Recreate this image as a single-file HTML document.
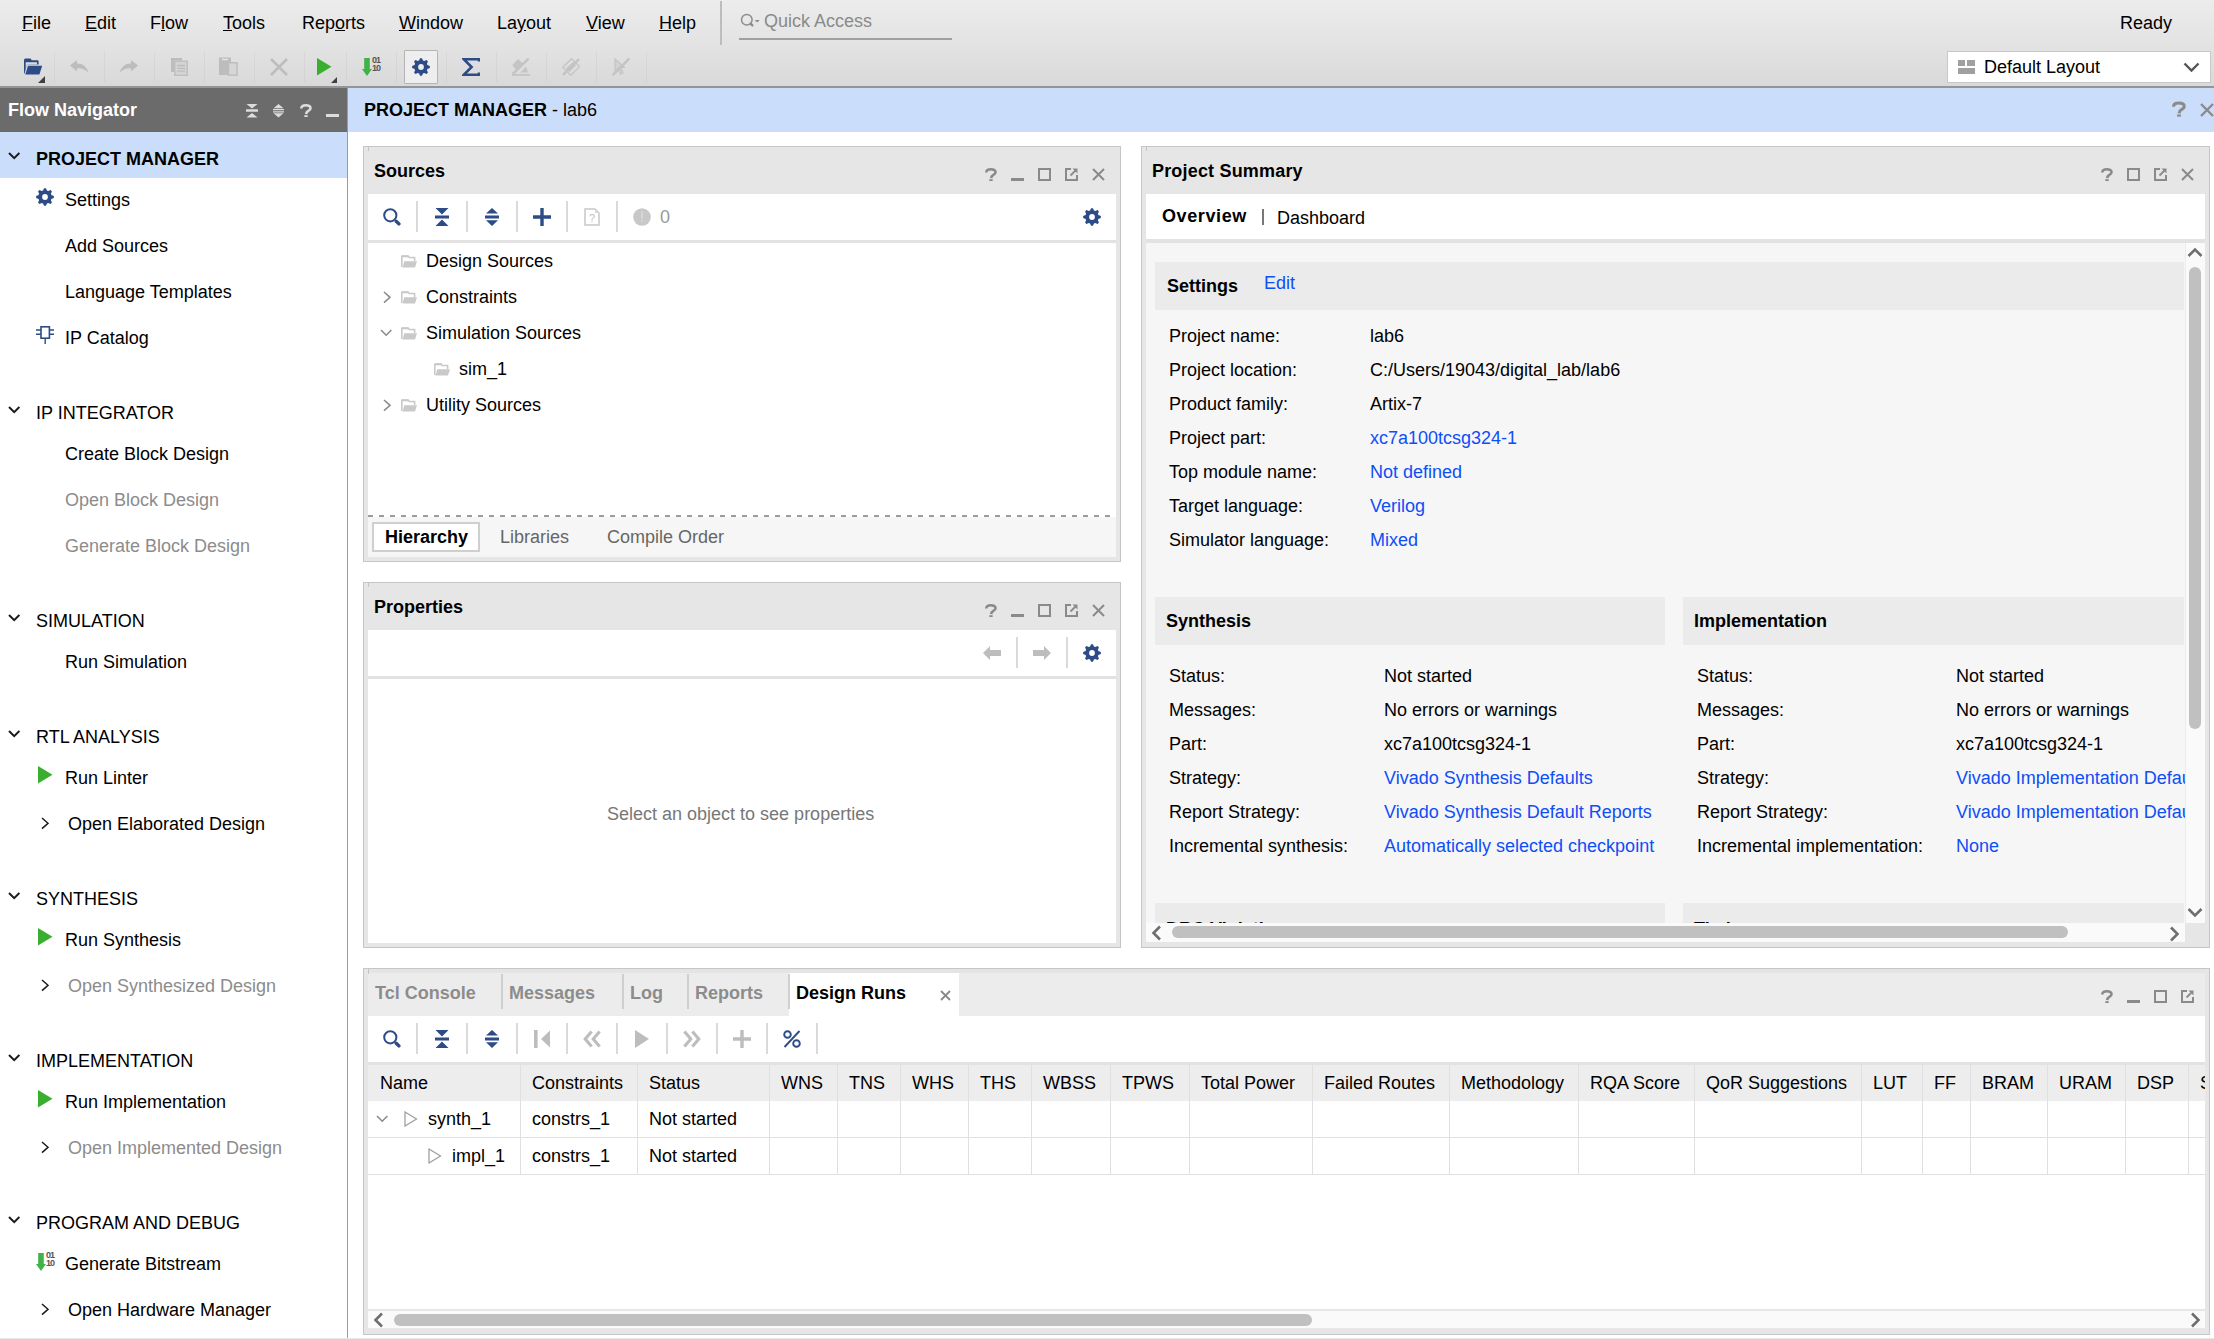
<!DOCTYPE html><html><head><meta charset="utf-8"><style>
html,body{margin:0;padding:0;}
body{width:2214px;height:1339px;position:relative;overflow:hidden;background:#fff;font-family:'Liberation Sans', sans-serif;}
body>div,body>svg{position:absolute;}
.t{position:absolute;white-space:nowrap;font-size:18px;line-height:20px;}
.u{text-decoration:underline;text-underline-offset:1px;}
</style></head><body>
<div style="left:0px;top:0px;width:2214px;height:86px;background:linear-gradient(#ececec 0px,#e3e3e3 44px,#d9d9d9 86px);"></div>
<div style="left:0px;top:86px;width:2214px;height:2px;background:#959595;"></div>
<div class="t" style="left:22px;top:13px;color:#000;"><u>F</u>ile</div>
<div class="t" style="left:85px;top:13px;color:#000;"><u>E</u>dit</div>
<div class="t" style="left:150px;top:13px;color:#000;">F<u>l</u>ow</div>
<div class="t" style="left:223px;top:13px;color:#000;"><u>T</u>ools</div>
<div class="t" style="left:302px;top:13px;color:#000;">Rep<u>o</u>rts</div>
<div class="t" style="left:399px;top:13px;color:#000;"><u>W</u>indow</div>
<div class="t" style="left:497px;top:13px;color:#000;">La<u>y</u>out</div>
<div class="t" style="left:586px;top:13px;color:#000;"><u>V</u>iew</div>
<div class="t" style="left:659px;top:13px;color:#000;"><u>H</u>elp</div>
<div style="left:720px;top:1px;width:2px;height:44px;background:#bdbdbd;"></div>
<svg style="left:740px;top:13px" width="22" height="16" viewBox="0 0 22 16"><circle cx="6.8" cy="6.8" r="5.3" fill="none" stroke="#8c8c8c" stroke-width="1.5"/><line x1="10.6" y1="10.6" x2="12.4" y2="12.4" stroke="#8c8c8c" stroke-width="2.3" stroke-linecap="round"/><path d="M14.6 7H19.8L17.2 9.6Z" fill="#8c8c8c"/></svg>
<div class="t" style="left:764px;top:11px;color:#8a8a8a;">Quick Access</div>
<div style="left:739px;top:38px;width:213px;height:2px;background:#a0a0a0;"></div>
<div class="t" style="left:2120px;top:13px;color:#000;">Ready</div>
<div style="left:54px;top:51px;width:1px;height:31px;background:rgba(0,0,0,0.035);"></div>
<div style="left:104px;top:51px;width:1px;height:31px;background:rgba(0,0,0,0.035);"></div>
<div style="left:154px;top:51px;width:1px;height:31px;background:rgba(0,0,0,0.035);"></div>
<div style="left:204px;top:51px;width:1px;height:31px;background:rgba(0,0,0,0.035);"></div>
<div style="left:254px;top:51px;width:1px;height:31px;background:rgba(0,0,0,0.035);"></div>
<div style="left:304px;top:51px;width:1px;height:31px;background:rgba(0,0,0,0.035);"></div>
<div style="left:346px;top:51px;width:1px;height:31px;background:rgba(0,0,0,0.035);"></div>
<div style="left:396px;top:51px;width:1px;height:31px;background:rgba(0,0,0,0.035);"></div>
<div style="left:446px;top:51px;width:1px;height:31px;background:rgba(0,0,0,0.035);"></div>
<div style="left:496px;top:51px;width:1px;height:31px;background:rgba(0,0,0,0.035);"></div>
<div style="left:546px;top:51px;width:1px;height:31px;background:rgba(0,0,0,0.035);"></div>
<div style="left:596px;top:51px;width:1px;height:31px;background:rgba(0,0,0,0.035);"></div>
<div style="left:646px;top:51px;width:1px;height:31px;background:rgba(0,0,0,0.035);"></div>
<svg style="left:23px;top:58px" width="20" height="18" viewBox="0 0 20 18"><path fill="#2c4b87" d="M1 2.2Q1 0.6 2.5 0.6H7.5L8.8 2.2H14.5Q15.6 2.2 15.6 3.3V6.5H5.2Q4 6.5 3.6 7.6L1.5 16Q1 15.2 1 14.5Z"/><path fill="#dcdcdc" d="M2.7 4.2H14V6.5H5.2Q4 6.5 3.6 7.6L2.7 11Z"/><path fill="#2c4b87" d="M5 7.8H19.2L16.4 16.6H2.3Z"/></svg>
<svg style="left:38px;top:76px" width="8" height="8" viewBox="0 0 8 8"><path d="M7 0V7H0Z" fill="#404040"/></svg>
<svg style="left:70px;top:60px" width="19" height="14" viewBox="0 0 19 14"><path fill="#bdbdbd" d="M0 5.5L7 0V3.4Q16 3.2 18.5 13Q15 8.2 7 8.3V11.5Z"/></svg>
<svg style="left:119px;top:60px" width="19" height="14" viewBox="0 0 19 14"><path fill="#bdbdbd" d="M19 5.5L12 0V3.4Q3 3.2 0.5 13Q4 8.2 12 8.3V11.5Z"/></svg>
<svg style="left:171px;top:57px" width="17" height="19" viewBox="0 0 17 19"><path fill="#bdbdbd" d="M0 1H11V3.5H3V15H0Z"/><rect x="3.8" y="4.2" width="12.4" height="14.2" fill="#d4d4d4" stroke="#bdbdbd" stroke-width="1.4"/><path stroke="#bdbdbd" stroke-width="1.3" d="M6.3 8.5H14M6.3 11.3H14M6.3 14.1H14"/></svg>
<svg style="left:219px;top:57px" width="19" height="19" viewBox="0 0 19 19"><rect x="0" y="0.5" width="12" height="17.5" fill="#bdbdbd"/><rect x="3" y="1.8" width="6" height="1.4" fill="#e6e6e6"/><rect x="9.5" y="5.8" width="8.6" height="12.4" fill="#d6d6d6" stroke="#bdbdbd" stroke-width="1.4"/></svg>
<svg style="left:270px;top:58px" width="18" height="18" viewBox="0 0 18 18"><path d="M1 1L17 17M17 1L1 17" stroke="#bdbdbd" stroke-width="2.6"/></svg>
<svg style="left:317px;top:58px" width="15" height="18" viewBox="0 0 15 18"><path fill="#3aaf2f" d="M0 0L14.5 8.7L0 17.4Z"/></svg>
<svg style="left:331px;top:77px" width="7" height="7" viewBox="0 0 7 7"><path d="M6 0V6H0Z" fill="#404040"/></svg>
<svg style="left:362px;top:58px" width="10" height="18" viewBox="0 0 10 18"><path fill="#3fb34a" d="M2.2 0H7.8V11H10L5 18L0 11H2.2Z"/></svg>
<div style="left:372px;top:56px;font:bold 9px/8px 'Liberation Sans',sans-serif;color:#555;letter-spacing:-1px">01<br>10</div>
<div style="left:404px;top:50px;width:32px;height:32px;background:#eeeeee;border:1px solid #b4b4b4;border-radius:1px"></div>
<svg style="left:412px;top:58px" width="18" height="18" viewBox="0 0 18 18"><path fill="#2c4b87" d="M7.04 2.59L8.07 0.15L9.93 0.15L10.96 2.59L12.15 3.08L14.60 2.08L15.92 3.40L14.92 5.85L15.41 7.04L17.85 8.07L17.85 9.93L15.41 10.96L14.92 12.15L15.92 14.60L14.60 15.92L12.15 14.92L10.96 15.41L9.93 17.85L8.07 17.85L7.04 15.41L5.85 14.92L3.40 15.92L2.08 14.60L3.08 12.15L2.59 10.96L0.15 9.93L0.15 8.07L2.59 7.04L3.08 5.85L2.08 3.40L3.40 2.08L5.85 3.08Z"/><circle cx="9" cy="9" r="2.9" fill="#eeeeee"/></svg>
<svg style="left:462px;top:58px" width="18" height="18" viewBox="0 0 18 18"><path fill="none" stroke="#2c4b87" stroke-width="2.6" stroke-linejoin="miter" d="M17 3.5V1.3H1.8L9.6 9L1.8 16.7H17V14.5"/></svg>
<svg style="left:512px;top:58px" width="18" height="18" viewBox="0 0 18 18"><path fill="#c4c4c4" d="M0.3 7.1L6.1 1L10.6 5.5L4.2 11.9Z"/><path stroke="#c4c4c4" stroke-width="2.6" stroke-linecap="round" d="M1.4 15.4L15.8 1.4"/><path fill="#c4c4c4" d="M7.9 14.6Q11.5 12.5 14 8.3L15.9 14.6Z"/><rect x="0" y="16" width="18" height="1.8" fill="#c4c4c4"/></svg>
<svg style="left:562px;top:58px" width="18" height="18" viewBox="0 0 18 18"><path fill="none" stroke="#c4c4c4" stroke-width="1.3" d="M0.8 9.2L9.5 0.8L17.6 8.6L8.8 17.2Z"/><path stroke="#c4c4c4" stroke-width="2.6" stroke-linecap="round" d="M1.8 16.2L16.2 1.8"/><path stroke="#c4c4c4" stroke-width="4.6" d="M5.6 12.4L12.4 5.6"/></svg>
<svg style="left:612px;top:58px" width="18" height="18" viewBox="0 0 18 18"><path fill="#d2d2d2" stroke="#c4c4c4" stroke-width="1.2" d="M3 1V13L6 10.5L8.5 16L11 15L8.5 9.5H12.5Z"/><path stroke="#c4c4c4" stroke-width="2.6" stroke-linecap="round" d="M1.4 16.4L16.5 1.3"/></svg>
<div style="left:1947px;top:51px;width:262px;height:30px;background:#ffffff;border:1px solid #c8c8c8"></div>
<svg style="left:1958px;top:60px" width="17" height="15" viewBox="0 0 17 15"><rect x="0" y="0" width="7" height="6" fill="#a0a0a0"/><rect x="9" y="0" width="8" height="6" fill="#a0a0a0"/><rect x="0" y="8" width="17" height="6" fill="#a0a0a0"/></svg>
<div class="t" style="left:1984px;top:57px;color:#000;">Default Layout</div>
<svg style="left:2183px;top:62px" width="17" height="11" viewBox="0 0 17 11"><polyline points="1.5,1.5 8.5,8.5 15.5,1.5" fill="none" stroke="#555" stroke-width="2.4"/></svg>
<div style="left:0px;top:88px;width:347px;height:44px;background:#6b6b6b;"></div>
<div class="t" style="left:8px;top:100px;font-weight:bold;color:#ffffff;">Flow Navigator</div>
<svg style="left:246px;top:104px" width="12" height="14" viewBox="0 0 12 14"><path fill="#dcdcdc" d="M0.5 0H11.5L6 4.6Z M0 5.2H12V7.8H0Z M6 8.9L11.5 13.5H0.5Z"/></svg>
<svg style="left:273px;top:104px" width="11" height="14" viewBox="0 0 11 14"><path fill="#dcdcdc" d="M5.5 0L10.5 4.2H0.5Z M0 5H11V6.2H0Z M0 7.2H11V8.4H0Z M0.5 9.3H10.5L5.5 13.5Z"/></svg>
<svg style="left:300px;top:104px" width="12" height="13" viewBox="0 0 12 13"><path d="M1.3 4.5Q1.3 1.3 5.9 1.3Q10.5 1.3 10.5 4.2Q10.5 5.8 8.4 6.9Q6.3 8 6.1 10.2" fill="none" stroke="#dcdcdc" stroke-width="2.6"/><rect x="4.3" y="11.2" width="3.4" height="1.8" fill="#dcdcdc"/></svg>
<div style="left:326px;top:114px;width:13px;height:3px;background:#dcdcdc;"></div>
<div style="left:347px;top:88px;width:1px;height:1250px;background:#9b9b9b;"></div>
<div style="left:0px;top:1338px;width:2214px;height:1px;background:#e8e8e8;"></div>
<div style="left:0px;top:132px;width:347px;height:46px;background:#cadefb;"></div>
<svg style="left:8px;top:152px" width="12" height="8" viewBox="0 0 12 8"><polyline points="1,1 6.2,6.2 11.4,1" fill="none" stroke="#1a1a1a" stroke-width="2.0"/></svg>
<div class="t" style="left:36px;top:149px;font-weight:bold;color:#000;">PROJECT MANAGER</div>
<div class="t" style="left:65px;top:190px;color:#000;">Settings</div>
<svg style="left:36px;top:188px" width="18" height="18" viewBox="0 0 18 18"><path fill="#2c4b87" d="M7.04 2.59L8.07 0.15L9.93 0.15L10.96 2.59L12.15 3.08L14.60 2.08L15.92 3.40L14.92 5.85L15.41 7.04L17.85 8.07L17.85 9.93L15.41 10.96L14.92 12.15L15.92 14.60L14.60 15.92L12.15 14.92L10.96 15.41L9.93 17.85L8.07 17.85L7.04 15.41L5.85 14.92L3.40 15.92L2.08 14.60L3.08 12.15L2.59 10.96L0.15 9.93L0.15 8.07L2.59 7.04L3.08 5.85L2.08 3.40L3.40 2.08L5.85 3.08Z"/><circle cx="9" cy="9" r="2.9" fill="#fff"/></svg>
<div class="t" style="left:65px;top:236px;color:#000;">Add Sources</div>
<div class="t" style="left:65px;top:282px;color:#000;">Language Templates</div>
<div class="t" style="left:65px;top:328px;color:#000;">IP Catalog</div>
<svg style="left:36px;top:326px" width="18" height="18" viewBox="0 0 18 18"><rect x="5" y="0.8" width="8.4" height="11.4" fill="none" stroke="#2c4b87" stroke-width="1.6"/><path stroke="#2c4b87" stroke-width="1.4" d="M0 4H5M13.4 4H18M0 8.2H5M13.4 8.2H18M9.2 12V18"/></svg>
<svg style="left:8px;top:406px" width="12" height="8" viewBox="0 0 12 8"><polyline points="1,1 6.2,6.2 11.4,1" fill="none" stroke="#1a1a1a" stroke-width="2.0"/></svg>
<div class="t" style="left:36px;top:403px;color:#000;">IP INTEGRATOR</div>
<div class="t" style="left:65px;top:444px;color:#000;">Create Block Design</div>
<div class="t" style="left:65px;top:490px;color:#8c8c8c;">Open Block Design</div>
<div class="t" style="left:65px;top:536px;color:#8c8c8c;">Generate Block Design</div>
<svg style="left:8px;top:614px" width="12" height="8" viewBox="0 0 12 8"><polyline points="1,1 6.2,6.2 11.4,1" fill="none" stroke="#1a1a1a" stroke-width="2.0"/></svg>
<div class="t" style="left:36px;top:611px;color:#000;">SIMULATION</div>
<div class="t" style="left:65px;top:652px;color:#000;">Run Simulation</div>
<svg style="left:8px;top:730px" width="12" height="8" viewBox="0 0 12 8"><polyline points="1,1 6.2,6.2 11.4,1" fill="none" stroke="#1a1a1a" stroke-width="2.0"/></svg>
<div class="t" style="left:36px;top:727px;color:#000;">RTL ANALYSIS</div>
<div class="t" style="left:65px;top:768px;color:#000;">Run Linter</div>
<svg style="left:38px;top:766px" width="15" height="18" viewBox="0 0 15 18"><path fill="#3aaf2f" d="M0 0L14.5 8.7L0 17.4Z"/></svg>
<svg style="left:41px;top:817px" width="8" height="13" viewBox="0 0 8 13"><polyline points="1,1 7,6.3 1,11.6" fill="none" stroke="#1a1a1a" stroke-width="1.5"/></svg>
<div class="t" style="left:68px;top:814px;color:#000;">Open Elaborated Design</div>
<svg style="left:8px;top:892px" width="12" height="8" viewBox="0 0 12 8"><polyline points="1,1 6.2,6.2 11.4,1" fill="none" stroke="#1a1a1a" stroke-width="2.0"/></svg>
<div class="t" style="left:36px;top:889px;color:#000;">SYNTHESIS</div>
<div class="t" style="left:65px;top:930px;color:#000;">Run Synthesis</div>
<svg style="left:38px;top:928px" width="15" height="18" viewBox="0 0 15 18"><path fill="#3aaf2f" d="M0 0L14.5 8.7L0 17.4Z"/></svg>
<svg style="left:41px;top:979px" width="8" height="13" viewBox="0 0 8 13"><polyline points="1,1 7,6.3 1,11.6" fill="none" stroke="#1a1a1a" stroke-width="1.5"/></svg>
<div class="t" style="left:68px;top:976px;color:#8c8c8c;">Open Synthesized Design</div>
<svg style="left:8px;top:1054px" width="12" height="8" viewBox="0 0 12 8"><polyline points="1,1 6.2,6.2 11.4,1" fill="none" stroke="#1a1a1a" stroke-width="2.0"/></svg>
<div class="t" style="left:36px;top:1051px;color:#000;">IMPLEMENTATION</div>
<div class="t" style="left:65px;top:1092px;color:#000;">Run Implementation</div>
<svg style="left:38px;top:1090px" width="15" height="18" viewBox="0 0 15 18"><path fill="#3aaf2f" d="M0 0L14.5 8.7L0 17.4Z"/></svg>
<svg style="left:41px;top:1141px" width="8" height="13" viewBox="0 0 8 13"><polyline points="1,1 7,6.3 1,11.6" fill="none" stroke="#1a1a1a" stroke-width="1.5"/></svg>
<div class="t" style="left:68px;top:1138px;color:#8c8c8c;">Open Implemented Design</div>
<svg style="left:8px;top:1216px" width="12" height="8" viewBox="0 0 12 8"><polyline points="1,1 6.2,6.2 11.4,1" fill="none" stroke="#1a1a1a" stroke-width="2.0"/></svg>
<div class="t" style="left:36px;top:1213px;color:#000;">PROGRAM AND DEBUG</div>
<div class="t" style="left:65px;top:1254px;color:#000;">Generate Bitstream</div>
<svg style="left:36px;top:1253px" width="10" height="18" viewBox="0 0 10 18"><path fill="#3fb34a" d="M2.2 0H7.8V11H10L5 18L0 11H2.2Z"/></svg>
<div style="left:46px;top:1251px;font:bold 9px/8px 'Liberation Sans',sans-serif;color:#555;letter-spacing:-1px">01<br>10</div>
<svg style="left:41px;top:1303px" width="8" height="13" viewBox="0 0 8 13"><polyline points="1,1 7,6.3 1,11.6" fill="none" stroke="#1a1a1a" stroke-width="1.5"/></svg>
<div class="t" style="left:68px;top:1300px;color:#000;">Open Hardware Manager</div>
<div style="left:348px;top:88px;width:1866px;height:44px;background:#cadefb;"></div>
<div class="t" style="left:364px;top:100px;color:#000;"><b>PROJECT MANAGER</b> - lab6</div>
<svg style="left:2172px;top:101px" width="14" height="16" viewBox="0 0 12 13"><path d="M1.3 4.5Q1.3 1.3 5.9 1.3Q10.5 1.3 10.5 4.2Q10.5 5.8 8.4 6.9Q6.3 8 6.1 10.2" fill="none" stroke="#8a8a8a" stroke-width="2.6"/><rect x="4.3" y="11.2" width="3.4" height="1.8" fill="#8a8a8a"/></svg>
<svg style="left:2200px;top:103px" width="14" height="14" viewBox="0 0 14 14"><path d="M1 1L13 13M13 1L1 13" stroke="#8a8a8a" stroke-width="2.4"/></svg>
<div style="left:363px;top:146px;width:758px;height:416px;background:#e6e6e6;box-sizing:border-box;border:1px solid #c6c6c6"></div>
<div style="left:368px;top:147px;width:1px;height:4px;background:#c4c4c4;"></div>
<div class="t" style="left:374px;top:161px;font-weight:bold;color:#000;">Sources</div>
<svg style="left:985px;top:168px" width="12" height="13" viewBox="0 0 12 13"><path d="M1.3 4.5Q1.3 1.3 5.9 1.3Q10.5 1.3 10.5 4.2Q10.5 5.8 8.4 6.9Q6.3 8 6.1 10.2" fill="none" stroke="#8a8a8a" stroke-width="2.6"/><rect x="4.3" y="11.2" width="3.4" height="1.8" fill="#8a8a8a"/></svg>
<div style="left:1011px;top:178px;width:13px;height:3px;background:#8a8a8a;"></div>
<svg style="left:1038px;top:168px" width="13" height="13" viewBox="0 0 13 13"><rect x="1" y="1" width="11" height="11" fill="none" stroke="#8a8a8a" stroke-width="2"/></svg>
<svg style="left:1065px;top:168px" width="13" height="13" viewBox="0 0 13 13"><path d="M6 1H1V12H12V7" fill="none" stroke="#8a8a8a" stroke-width="2"/><path d="M5.5 7.5L11 2" stroke="#8a8a8a" stroke-width="1.8"/><path d="M7.5 0.5H12.5V5.5Z" fill="#8a8a8a"/></svg>
<svg style="left:1092px;top:168px" width="13" height="13" viewBox="0 0 13 13"><path d="M1 1L12 12M12 1L1 12" stroke="#8a8a8a" stroke-width="2"/></svg>
<div style="left:368px;top:194px;width:748px;height:46px;background:#ffffff;"></div>
<div style="left:368px;top:240px;width:748px;height:3px;background:#e2e2e2;"></div>
<div style="left:368px;top:243px;width:748px;height:272px;background:#ffffff;"></div>
<svg style="left:383px;top:208px" width="18" height="18" viewBox="0 0 18 18"><circle cx="7.3" cy="7.3" r="6.1" fill="none" stroke="#2c4b87" stroke-width="2"/><line x1="13.2" y1="13.2" x2="15.9" y2="15.9" stroke="#2c4b87" stroke-width="3.4" stroke-linecap="round"/></svg>
<div style="left:416px;top:201px;width:2px;height:31px;background:#dadada;"></div>
<svg style="left:435px;top:208px" width="14" height="18" viewBox="0 0 14 18"><path fill="#2c4b87" d="M0.5 0H13.5L7 6.5Z M0 7.6H14V10.4H0Z M7 11.5L13.5 18H0.5Z"/></svg>
<div style="left:466px;top:201px;width:2px;height:31px;background:#dadada;"></div>
<svg style="left:485px;top:208px" width="14" height="18" viewBox="0 0 14 18"><path fill="#2c4b87" d="M7 0L13 5.6H1Z M0 7.6H14V10.4H0Z M1 12.3H13L7 18Z"/></svg>
<div style="left:516px;top:201px;width:2px;height:31px;background:#dadada;"></div>
<svg style="left:533px;top:208px" width="18" height="18" viewBox="0 0 18 18"><path fill="#2c4b87" d="M7.3 0H10.7V7.3H18V10.7H10.7V18H7.3V10.7H0V7.3H7.3Z"/></svg>
<div style="left:566px;top:201px;width:2px;height:31px;background:#dadada;"></div>
<svg style="left:584px;top:208px" width="16" height="18" viewBox="0 0 16 18"><path d="M1 1H11L15 5V17H1Z" fill="none" stroke="#c8c8c8" stroke-width="1.5"/><path d="M11 1V5H15" fill="#d8d8d8"/><text x="8" y="14" font-family="Liberation Sans" font-size="11" fill="#c0c0c0" text-anchor="middle">?</text></svg>
<div style="left:616px;top:201px;width:2px;height:31px;background:#dadada;"></div>
<svg style="left:633px;top:208px" width="18" height="18" viewBox="0 0 18 18"><circle cx="9" cy="9" r="8.8" fill="#c8c8c8"/><rect x="8.1" y="3.6" width="1.8" height="7" fill="#d8d8d8"/><rect x="8.1" y="12.2" width="1.8" height="1.8" fill="#d8d8d8"/></svg>
<div class="t" style="left:660px;top:207px;color:#9a9a9a;">0</div>
<svg style="left:1083px;top:208px" width="18" height="18" viewBox="0 0 18 18"><path fill="#2c4b87" d="M7.04 2.59L8.07 0.15L9.93 0.15L10.96 2.59L12.15 3.08L14.60 2.08L15.92 3.40L14.92 5.85L15.41 7.04L17.85 8.07L17.85 9.93L15.41 10.96L14.92 12.15L15.92 14.60L14.60 15.92L12.15 14.92L10.96 15.41L9.93 17.85L8.07 17.85L7.04 15.41L5.85 14.92L3.40 15.92L2.08 14.60L3.08 12.15L2.59 10.96L0.15 9.93L0.15 8.07L2.59 7.04L3.08 5.85L2.08 3.40L3.40 2.08L5.85 3.08Z"/><circle cx="9" cy="9" r="2.9" fill="#fff"/></svg>
<svg style="left:401px;top:254px" width="17" height="14" viewBox="0 0 17 14"><path fill="none" stroke="#c9c9c9" stroke-width="1.6" d="M0.8 13V2.3H7.2L8.2 3.5H13.6V7"/><path fill="#c9c9c9" d="M0.8 1.2H7.6V3.3H0.8Z"/><path fill="#c9c9c9" d="M3.2 7.2H16L14 13.6H1.6Z"/></svg>
<div class="t" style="left:426px;top:251px;color:#000;">Design Sources</div>
<svg style="left:383px;top:291px" width="9" height="14" viewBox="0 0 9 14"><polyline points="1,1 7,6.3 1,11.6" fill="none" stroke="#8c8c8c" stroke-width="1.6"/></svg>
<svg style="left:401px;top:290px" width="17" height="14" viewBox="0 0 17 14"><path fill="none" stroke="#c9c9c9" stroke-width="1.6" d="M0.8 13V2.3H7.2L8.2 3.5H13.6V7"/><path fill="#c9c9c9" d="M0.8 1.2H7.6V3.3H0.8Z"/><path fill="#c9c9c9" d="M3.2 7.2H16L14 13.6H1.6Z"/></svg>
<div class="t" style="left:426px;top:287px;color:#000;">Constraints</div>
<svg style="left:380px;top:329px" width="13" height="8" viewBox="0 0 13 8"><polyline points="1,1 6.2,6.2 11.4,1" fill="none" stroke="#8c8c8c" stroke-width="1.6"/></svg>
<svg style="left:401px;top:326px" width="17" height="14" viewBox="0 0 17 14"><path fill="none" stroke="#c9c9c9" stroke-width="1.6" d="M0.8 13V2.3H7.2L8.2 3.5H13.6V7"/><path fill="#c9c9c9" d="M0.8 1.2H7.6V3.3H0.8Z"/><path fill="#c9c9c9" d="M3.2 7.2H16L14 13.6H1.6Z"/></svg>
<div class="t" style="left:426px;top:323px;color:#000;">Simulation Sources</div>
<svg style="left:434px;top:362px" width="17" height="14" viewBox="0 0 17 14"><path fill="none" stroke="#c9c9c9" stroke-width="1.6" d="M0.8 13V2.3H7.2L8.2 3.5H13.6V7"/><path fill="#c9c9c9" d="M0.8 1.2H7.6V3.3H0.8Z"/><path fill="#c9c9c9" d="M3.2 7.2H16L14 13.6H1.6Z"/></svg>
<div class="t" style="left:459px;top:359px;color:#000;">sim_1</div>
<svg style="left:383px;top:399px" width="9" height="14" viewBox="0 0 9 14"><polyline points="1,1 7,6.3 1,11.6" fill="none" stroke="#8c8c8c" stroke-width="1.6"/></svg>
<svg style="left:401px;top:398px" width="17" height="14" viewBox="0 0 17 14"><path fill="none" stroke="#c9c9c9" stroke-width="1.6" d="M0.8 13V2.3H7.2L8.2 3.5H13.6V7"/><path fill="#c9c9c9" d="M0.8 1.2H7.6V3.3H0.8Z"/><path fill="#c9c9c9" d="M3.2 7.2H16L14 13.6H1.6Z"/></svg>
<div class="t" style="left:426px;top:395px;color:#000;">Utility Sources</div>
<div style="left:368px;top:515px;width:748px;height:2px;background:repeating-linear-gradient(90deg,#9c9c9c 0 5px,#ffffff 5px 11px)"></div>
<div style="left:368px;top:517px;width:748px;height:40px;background:#f6f6f6;"></div>
<div style="left:372px;top:522px;width:108px;height:30px;background:#ffffff;box-sizing:border-box;border:2px solid #cfcfcf"></div>
<div class="t" style="left:385px;top:527px;font-weight:bold;color:#000;">Hierarchy</div>
<div class="t" style="left:500px;top:527px;color:#666;">Libraries</div>
<div class="t" style="left:607px;top:527px;color:#666;">Compile Order</div>
<div style="left:363px;top:582px;width:758px;height:366px;background:#e6e6e6;box-sizing:border-box;border:1px solid #c6c6c6"></div>
<div style="left:368px;top:583px;width:1px;height:4px;background:#c4c4c4;"></div>
<div class="t" style="left:374px;top:597px;font-weight:bold;color:#000;">Properties</div>
<svg style="left:985px;top:604px" width="12" height="13" viewBox="0 0 12 13"><path d="M1.3 4.5Q1.3 1.3 5.9 1.3Q10.5 1.3 10.5 4.2Q10.5 5.8 8.4 6.9Q6.3 8 6.1 10.2" fill="none" stroke="#8a8a8a" stroke-width="2.6"/><rect x="4.3" y="11.2" width="3.4" height="1.8" fill="#8a8a8a"/></svg>
<div style="left:1011px;top:614px;width:13px;height:3px;background:#8a8a8a;"></div>
<svg style="left:1038px;top:604px" width="13" height="13" viewBox="0 0 13 13"><rect x="1" y="1" width="11" height="11" fill="none" stroke="#8a8a8a" stroke-width="2"/></svg>
<svg style="left:1065px;top:604px" width="13" height="13" viewBox="0 0 13 13"><path d="M6 1H1V12H12V7" fill="none" stroke="#8a8a8a" stroke-width="2"/><path d="M5.5 7.5L11 2" stroke="#8a8a8a" stroke-width="1.8"/><path d="M7.5 0.5H12.5V5.5Z" fill="#8a8a8a"/></svg>
<svg style="left:1092px;top:604px" width="13" height="13" viewBox="0 0 13 13"><path d="M1 1L12 12M12 1L1 12" stroke="#8a8a8a" stroke-width="2"/></svg>
<div style="left:368px;top:630px;width:748px;height:46px;background:#ffffff;"></div>
<div style="left:368px;top:676px;width:748px;height:3px;background:#e2e2e2;"></div>
<div style="left:368px;top:679px;width:748px;height:264px;background:#ffffff;"></div>
<svg style="left:983px;top:646px" width="18" height="14" viewBox="0 0 18 14"><path fill="#bdbdbd" d="M0 7L7 0V4H18V10H7V14Z"/></svg>
<div style="left:1016px;top:637px;width:2px;height:31px;background:#dadada;"></div>
<svg style="left:1033px;top:646px" width="18" height="14" viewBox="0 0 18 14"><path fill="#bdbdbd" d="M18 7L11 0V4H0V10H11V14Z"/></svg>
<div style="left:1066px;top:637px;width:2px;height:31px;background:#dadada;"></div>
<svg style="left:1083px;top:644px" width="18" height="18" viewBox="0 0 18 18"><path fill="#2c4b87" d="M7.04 2.59L8.07 0.15L9.93 0.15L10.96 2.59L12.15 3.08L14.60 2.08L15.92 3.40L14.92 5.85L15.41 7.04L17.85 8.07L17.85 9.93L15.41 10.96L14.92 12.15L15.92 14.60L14.60 15.92L12.15 14.92L10.96 15.41L9.93 17.85L8.07 17.85L7.04 15.41L5.85 14.92L3.40 15.92L2.08 14.60L3.08 12.15L2.59 10.96L0.15 9.93L0.15 8.07L2.59 7.04L3.08 5.85L2.08 3.40L3.40 2.08L5.85 3.08Z"/><circle cx="9" cy="9" r="2.9" fill="#fff"/></svg>
<div class="t" style="left:607px;top:804px;color:#777;">Select an object to see properties</div>
<div style="left:1141px;top:146px;width:1069px;height:802px;background:#e6e6e6;box-sizing:border-box;border:1px solid #c6c6c6"></div>
<div style="left:1146px;top:147px;width:1px;height:4px;background:#c4c4c4;"></div>
<div class="t" style="left:1152px;top:161px;font-weight:bold;color:#000;"><span style='letter-spacing:0.18px'>Project Summary</span></div>
<svg style="left:2101px;top:168px" width="12" height="13" viewBox="0 0 12 13"><path d="M1.3 4.5Q1.3 1.3 5.9 1.3Q10.5 1.3 10.5 4.2Q10.5 5.8 8.4 6.9Q6.3 8 6.1 10.2" fill="none" stroke="#8a8a8a" stroke-width="2.6"/><rect x="4.3" y="11.2" width="3.4" height="1.8" fill="#8a8a8a"/></svg>
<svg style="left:2127px;top:168px" width="13" height="13" viewBox="0 0 13 13"><rect x="1" y="1" width="11" height="11" fill="none" stroke="#8a8a8a" stroke-width="2"/></svg>
<svg style="left:2154px;top:168px" width="13" height="13" viewBox="0 0 13 13"><path d="M6 1H1V12H12V7" fill="none" stroke="#8a8a8a" stroke-width="2"/><path d="M5.5 7.5L11 2" stroke="#8a8a8a" stroke-width="1.8"/><path d="M7.5 0.5H12.5V5.5Z" fill="#8a8a8a"/></svg>
<svg style="left:2181px;top:168px" width="13" height="13" viewBox="0 0 13 13"><path d="M1 1L12 12M12 1L1 12" stroke="#8a8a8a" stroke-width="2"/></svg>
<div style="left:1146px;top:194px;width:1059px;height:45px;background:#ffffff;"></div>
<div style="left:1146px;top:239px;width:1059px;height:4px;background:#e2e2e2;"></div>
<div class="t" style="left:1162px;top:206px;font-weight:bold;color:#000;"><span style='letter-spacing:0.6px'>Overview</span></div>
<div style="left:1262px;top:209px;width:2px;height:16px;background:#777777;"></div>
<div class="t" style="left:1277px;top:208px;color:#000;">Dashboard</div>
<div style="left:1146px;top:243px;width:1039px;height:680px;background:#f6f6f6;overflow:hidden">
<div style="position:absolute;left:9px;top:19px;width:1029px;height:48px;background:#ebebeb"></div>
<div class="t" style="left:21px;top:33px;font-weight:bold;color:#000">Settings</div>
<div class="t" style="left:118px;top:30px;color:#0e4ef6">Edit</div>
<div class="t" style="left:23px;top:83px;color:#000">Project name:</div>
<div class="t" style="left:224px;top:83px;color:#000">lab6</div>
<div class="t" style="left:23px;top:117px;color:#000">Project location:</div>
<div class="t" style="left:224px;top:117px;color:#000">C:/Users/19043/digital_lab/lab6</div>
<div class="t" style="left:23px;top:151px;color:#000">Product family:</div>
<div class="t" style="left:224px;top:151px;color:#000">Artix-7</div>
<div class="t" style="left:23px;top:185px;color:#000">Project part:</div>
<div class="t" style="left:224px;top:185px;color:#0e4ef6">xc7a100tcsg324-1</div>
<div class="t" style="left:23px;top:219px;color:#000">Top module name:</div>
<div class="t" style="left:224px;top:219px;color:#0e4ef6">Not defined</div>
<div class="t" style="left:23px;top:253px;color:#000">Target language:</div>
<div class="t" style="left:224px;top:253px;color:#0e4ef6">Verilog</div>
<div class="t" style="left:23px;top:287px;color:#000">Simulator language:</div>
<div class="t" style="left:224px;top:287px;color:#0e4ef6">Mixed</div>
<div style="position:absolute;left:9px;top:354px;width:510px;height:48px;background:#ebebeb"></div>
<div style="position:absolute;left:537px;top:354px;width:501px;height:48px;background:#ebebeb"></div>
<div class="t" style="left:20px;top:368px;font-weight:bold;color:#000">Synthesis</div>
<div class="t" style="left:548px;top:368px;font-weight:bold;color:#000">Implementation</div>
<div class="t" style="left:23px;top:423px;color:#000">Status:</div>
<div class="t" style="left:238px;top:423px;color:#000">Not started</div>
<div class="t" style="left:551px;top:423px;color:#000">Status:</div>
<div class="t" style="left:810px;top:423px;color:#000">Not started</div>
<div class="t" style="left:23px;top:457px;color:#000">Messages:</div>
<div class="t" style="left:238px;top:457px;color:#000">No errors or warnings</div>
<div class="t" style="left:551px;top:457px;color:#000">Messages:</div>
<div class="t" style="left:810px;top:457px;color:#000">No errors or warnings</div>
<div class="t" style="left:23px;top:491px;color:#000">Part:</div>
<div class="t" style="left:238px;top:491px;color:#000">xc7a100tcsg324-1</div>
<div class="t" style="left:551px;top:491px;color:#000">Part:</div>
<div class="t" style="left:810px;top:491px;color:#000">xc7a100tcsg324-1</div>
<div class="t" style="left:23px;top:525px;color:#000">Strategy:</div>
<div class="t" style="left:238px;top:525px;color:#0e4ef6">Vivado Synthesis Defaults</div>
<div class="t" style="left:551px;top:525px;color:#000">Strategy:</div>
<div class="t" style="left:810px;top:525px;color:#0e4ef6">Vivado Implementation Defaults</div>
<div class="t" style="left:23px;top:559px;color:#000">Report Strategy:</div>
<div class="t" style="left:238px;top:559px;color:#0e4ef6">Vivado Synthesis Default Reports</div>
<div class="t" style="left:551px;top:559px;color:#000">Report Strategy:</div>
<div class="t" style="left:810px;top:559px;color:#0e4ef6">Vivado Implementation Default Reports</div>
<div class="t" style="left:23px;top:593px;color:#000">Incremental synthesis:</div>
<div class="t" style="left:238px;top:593px;color:#0e4ef6">Automatically selected checkpoint</div>
<div class="t" style="left:551px;top:593px;color:#000">Incremental implementation:</div>
<div class="t" style="left:810px;top:593px;color:#0e4ef6">None</div>
<div style="position:absolute;left:9px;top:660px;width:510px;height:48px;background:#ebebeb"></div>
<div style="position:absolute;left:537px;top:660px;width:501px;height:48px;background:#ebebeb"></div>
<div class="t" style="left:20px;top:676px;font-weight:bold;color:#000">DRC Violations</div>
<div class="t" style="left:548px;top:676px;font-weight:bold;color:#000">Timing</div>
</div>
<div style="left:2185px;top:243px;width:20px;height:680px;background:#fafafa;"></div>
<div style="left:2185px;top:243px;width:1px;height:680px;background:#ececec;"></div>
<svg style="left:2187px;top:247px" width="16" height="11" viewBox="0 0 16 11"><polyline points="1.5,9 8,2.5 14.5,9" fill="none" stroke="#6e6e6e" stroke-width="2.6"/></svg>
<div style="left:2189px;top:267px;width:12px;height:462px;background:#c0c0c0;border-radius:6px"></div>
<svg style="left:2187px;top:907px" width="16" height="11" viewBox="0 0 16 11"><polyline points="1.5,2 8,8.5 14.5,2" fill="none" stroke="#6e6e6e" stroke-width="2.6"/></svg>
<div style="left:1146px;top:923px;width:1039px;height:19px;background:#fafafa;"></div>
<svg style="left:1151px;top:925px" width="11" height="16" viewBox="0 0 11 16"><polyline points="9,1.5 2.5,8 9,14.5" fill="none" stroke="#6e6e6e" stroke-width="2.6"/></svg>
<div style="left:1172px;top:926px;width:896px;height:12px;background:#c0c0c0;border-radius:6px"></div>
<svg style="left:2169px;top:926px" width="11" height="16" viewBox="0 0 11 16"><polyline points="2,1.5 8.5,8 2,14.5" fill="none" stroke="#6e6e6e" stroke-width="2.6"/></svg>
<div style="left:2185px;top:923px;width:20px;height:19px;background:#e6e6e6;"></div>
<div style="left:363px;top:968px;width:1847px;height:367px;background:#e6e6e6;box-sizing:border-box;border:1px solid #c6c6c6"></div>
<div style="left:368px;top:969px;width:1px;height:4px;background:#c4c4c4;"></div>
<div style="left:368px;top:969px;width:1837px;height:4px;background:#e4e4e4;"></div>
<div style="left:368px;top:973px;width:1837px;height:43px;background:#ececec;"></div>
<div style="left:368px;top:969px;width:1px;height:5px;background:#c4c4c4;"></div>
<div class="t" style="left:375px;top:983px;font-weight:bold;color:#8c8c8c;">Tcl Console</div>
<div class="t" style="left:509px;top:983px;font-weight:bold;color:#8c8c8c;">Messages</div>
<div class="t" style="left:630px;top:983px;font-weight:bold;color:#8c8c8c;">Log</div>
<div class="t" style="left:695px;top:983px;font-weight:bold;color:#8c8c8c;">Reports</div>
<div style="left:501px;top:974px;width:2px;height:35px;background:#cfcfcf;"></div>
<div style="left:622px;top:974px;width:2px;height:35px;background:#cfcfcf;"></div>
<div style="left:687px;top:974px;width:2px;height:35px;background:#cfcfcf;"></div>
<div style="left:789px;top:973px;width:170px;height:43px;background:#ffffff;"></div>
<div style="left:788px;top:974px;width:2px;height:35px;background:#cfcfcf;"></div>
<div class="t" style="left:796px;top:983px;font-weight:bold;color:#000;">Design Runs</div>
<svg style="left:940px;top:990px" width="11" height="11" viewBox="0 0 11 11"><path d="M1 1L10 10M10 1L1 10" stroke="#888" stroke-width="1.8"/></svg>
<svg style="left:2101px;top:990px" width="12" height="13" viewBox="0 0 12 13"><path d="M1.3 4.5Q1.3 1.3 5.9 1.3Q10.5 1.3 10.5 4.2Q10.5 5.8 8.4 6.9Q6.3 8 6.1 10.2" fill="none" stroke="#8a8a8a" stroke-width="2.6"/><rect x="4.3" y="11.2" width="3.4" height="1.8" fill="#8a8a8a"/></svg>
<div style="left:2127px;top:1000px;width:13px;height:3px;background:#8a8a8a;"></div>
<svg style="left:2154px;top:990px" width="13" height="13" viewBox="0 0 13 13"><rect x="1" y="1" width="11" height="11" fill="none" stroke="#8a8a8a" stroke-width="2"/></svg>
<svg style="left:2181px;top:990px" width="13" height="13" viewBox="0 0 13 13"><path d="M6 1H1V12H12V7" fill="none" stroke="#8a8a8a" stroke-width="2"/><path d="M5.5 7.5L11 2" stroke="#8a8a8a" stroke-width="1.8"/><path d="M7.5 0.5H12.5V5.5Z" fill="#8a8a8a"/></svg>
<div style="left:368px;top:1016px;width:1837px;height:46px;background:#ffffff;"></div>
<div style="left:368px;top:1062px;width:1837px;height:3px;background:#e2e2e2;"></div>
<svg style="left:383px;top:1030px" width="18" height="18" viewBox="0 0 18 18"><circle cx="7.3" cy="7.3" r="6.1" fill="none" stroke="#2c4b87" stroke-width="2"/><line x1="13.2" y1="13.2" x2="15.9" y2="15.9" stroke="#2c4b87" stroke-width="3.4" stroke-linecap="round"/></svg>
<svg style="left:435px;top:1030px" width="14" height="18" viewBox="0 0 14 18"><path fill="#2c4b87" d="M0.5 0H13.5L7 6.5Z M0 7.6H14V10.4H0Z M7 11.5L13.5 18H0.5Z"/></svg>
<svg style="left:485px;top:1030px" width="14" height="18" viewBox="0 0 14 18"><path fill="#2c4b87" d="M7 0L13 5.6H1Z M0 7.6H14V10.4H0Z M1 12.3H13L7 18Z"/></svg>
<svg style="left:534px;top:1030px" width="16" height="18" viewBox="0 0 16 18"><rect x="0" y="0" width="3.6" height="18" fill="#bdbdbd"/><path d="M16 0.5V17.5L7 9Z" fill="#bdbdbd"/></svg>
<svg style="left:583px;top:1030px" width="18" height="18" viewBox="0 0 18 18"><path fill="none" stroke="#bdbdbd" stroke-width="3.1" d="M8.6 1.4L2.2 9L8.6 16.6M16.6 1.4L10.2 9L16.6 16.6"/></svg>
<svg style="left:635px;top:1030px" width="14" height="18" viewBox="0 0 14 18"><path d="M0 0L14 9L0 18Z" fill="#bdbdbd"/></svg>
<svg style="left:683px;top:1030px" width="18" height="18" viewBox="0 0 18 18"><path fill="none" stroke="#bdbdbd" stroke-width="3.1" d="M1.4 1.4L7.8 9L1.4 16.6M9.4 1.4L15.8 9L9.4 16.6"/></svg>
<svg style="left:733px;top:1030px" width="18" height="18" viewBox="0 0 18 18"><path fill="#bdbdbd" d="M7.3 0H10.7V7.3H18V10.7H10.7V18H7.3V10.7H0V7.3H7.3Z"/></svg>
<svg style="left:783px;top:1030px" width="18" height="18" viewBox="0 0 18 18"><circle cx="4.5" cy="4.5" r="3.3" fill="none" stroke="#2c4b87" stroke-width="1.9"/><circle cx="13.5" cy="13.5" r="3.3" fill="none" stroke="#2c4b87" stroke-width="1.9"/><path d="M16.5 1L1.5 17" stroke="#2c4b87" stroke-width="1.9"/></svg>
<div style="left:416px;top:1023px;width:2px;height:31px;background:#dadada;"></div>
<div style="left:466px;top:1023px;width:2px;height:31px;background:#dadada;"></div>
<div style="left:516px;top:1023px;width:2px;height:31px;background:#dadada;"></div>
<div style="left:566px;top:1023px;width:2px;height:31px;background:#dadada;"></div>
<div style="left:616px;top:1023px;width:2px;height:31px;background:#dadada;"></div>
<div style="left:666px;top:1023px;width:2px;height:31px;background:#dadada;"></div>
<div style="left:716px;top:1023px;width:2px;height:31px;background:#dadada;"></div>
<div style="left:766px;top:1023px;width:2px;height:31px;background:#dadada;"></div>
<div style="left:816px;top:1023px;width:2px;height:31px;background:#dadada;"></div>
<div style="left:368px;top:1065px;width:1837px;height:244px;background:#fff;overflow:hidden">
<div style="position:absolute;left:0px;top:0px;width:1837px;height:36px;background:#ededed"></div>
<div class="t" style="left:12px;top:8px;color:#000">Name</div>
<div style="position:absolute;left:152px;top:0px;width:1px;height:109px;background:#e0e0e0"></div>
<div class="t" style="left:164px;top:8px;color:#000">Constraints</div>
<div style="position:absolute;left:269px;top:0px;width:1px;height:109px;background:#e0e0e0"></div>
<div class="t" style="left:281px;top:8px;color:#000">Status</div>
<div style="position:absolute;left:401px;top:0px;width:1px;height:109px;background:#e0e0e0"></div>
<div class="t" style="left:413px;top:8px;color:#000">WNS</div>
<div style="position:absolute;left:469px;top:0px;width:1px;height:109px;background:#e0e0e0"></div>
<div class="t" style="left:481px;top:8px;color:#000">TNS</div>
<div style="position:absolute;left:532px;top:0px;width:1px;height:109px;background:#e0e0e0"></div>
<div class="t" style="left:544px;top:8px;color:#000">WHS</div>
<div style="position:absolute;left:600px;top:0px;width:1px;height:109px;background:#e0e0e0"></div>
<div class="t" style="left:612px;top:8px;color:#000">THS</div>
<div style="position:absolute;left:663px;top:0px;width:1px;height:109px;background:#e0e0e0"></div>
<div class="t" style="left:675px;top:8px;color:#000">WBSS</div>
<div style="position:absolute;left:742px;top:0px;width:1px;height:109px;background:#e0e0e0"></div>
<div class="t" style="left:754px;top:8px;color:#000">TPWS</div>
<div style="position:absolute;left:821px;top:0px;width:1px;height:109px;background:#e0e0e0"></div>
<div class="t" style="left:833px;top:8px;color:#000">Total Power</div>
<div style="position:absolute;left:944px;top:0px;width:1px;height:109px;background:#e0e0e0"></div>
<div class="t" style="left:956px;top:8px;color:#000">Failed Routes</div>
<div style="position:absolute;left:1081px;top:0px;width:1px;height:109px;background:#e0e0e0"></div>
<div class="t" style="left:1093px;top:8px;color:#000">Methodology</div>
<div style="position:absolute;left:1210px;top:0px;width:1px;height:109px;background:#e0e0e0"></div>
<div class="t" style="left:1222px;top:8px;color:#000">RQA Score</div>
<div style="position:absolute;left:1326px;top:0px;width:1px;height:109px;background:#e0e0e0"></div>
<div class="t" style="left:1338px;top:8px;color:#000">QoR Suggestions</div>
<div style="position:absolute;left:1493px;top:0px;width:1px;height:109px;background:#e0e0e0"></div>
<div class="t" style="left:1505px;top:8px;color:#000">LUT</div>
<div style="position:absolute;left:1554px;top:0px;width:1px;height:109px;background:#e0e0e0"></div>
<div class="t" style="left:1566px;top:8px;color:#000">FF</div>
<div style="position:absolute;left:1602px;top:0px;width:1px;height:109px;background:#e0e0e0"></div>
<div class="t" style="left:1614px;top:8px;color:#000">BRAM</div>
<div style="position:absolute;left:1679px;top:0px;width:1px;height:109px;background:#e0e0e0"></div>
<div class="t" style="left:1691px;top:8px;color:#000">URAM</div>
<div style="position:absolute;left:1757px;top:0px;width:1px;height:109px;background:#e0e0e0"></div>
<div class="t" style="left:1769px;top:8px;color:#000">DSP</div>
<div style="position:absolute;left:1820px;top:0px;width:1px;height:109px;background:#e0e0e0"></div>
<div class="t" style="left:1832px;top:8px;color:#000">Start</div>
<div style="position:absolute;left:0px;top:72px;width:1837px;height:1px;background:#e0e0e0"></div>
<div style="position:absolute;left:0px;top:109px;width:1837px;height:1px;background:#e0e0e0"></div>
</div>
<svg style="left:376px;top:1115px" width="13" height="8" viewBox="0 0 13 8"><polyline points="1,1 6.2,6.2 11.4,1" fill="none" stroke="#8c8c8c" stroke-width="1.6"/></svg>
<svg style="left:404px;top:1111px" width="14" height="16" viewBox="0 0 14 16"><path d="M1 1L12.5 8L1 15Z" fill="none" stroke="#a0a0a0" stroke-width="1.3"/></svg>
<div class="t" style="left:428px;top:1109px;color:#000;">synth_1</div>
<svg style="left:428px;top:1148px" width="14" height="16" viewBox="0 0 14 16"><path d="M1 1L12.5 8L1 15Z" fill="none" stroke="#a0a0a0" stroke-width="1.3"/></svg>
<div class="t" style="left:452px;top:1146px;color:#000;">impl_1</div>
<div class="t" style="left:532px;top:1109px;color:#000;">constrs_1</div>
<div class="t" style="left:532px;top:1146px;color:#000;">constrs_1</div>
<div class="t" style="left:649px;top:1109px;color:#000;">Not started</div>
<div class="t" style="left:649px;top:1146px;color:#000;">Not started</div>
<div style="left:368px;top:1309px;width:1837px;height:2px;background:#e6e6e6;"></div>
<div style="left:368px;top:1311px;width:1837px;height:17px;background:#fafafa;"></div>
<svg style="left:373px;top:1312px" width="11" height="16" viewBox="0 0 11 16"><polyline points="9,1.5 2.5,8 9,14.5" fill="none" stroke="#6e6e6e" stroke-width="2.6"/></svg>
<div style="left:394px;top:1314px;width:918px;height:12px;background:#c0c0c0;border-radius:6px"></div>
<svg style="left:2190px;top:1312px" width="11" height="16" viewBox="0 0 11 16"><polyline points="2,1.5 8.5,8 2,14.5" fill="none" stroke="#6e6e6e" stroke-width="2.6"/></svg>
</body></html>
